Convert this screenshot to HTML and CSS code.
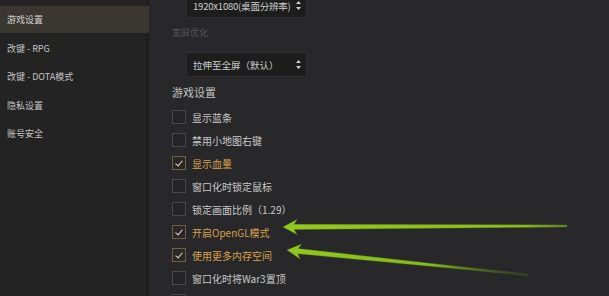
FILE: index.html
```html
<!DOCTYPE html>
<html lang="zh">
<head>
  <meta charset="UTF-8">
  <title>设置</title>
  <link rel="stylesheet" href="styles.css">
</head>
<body>
  <div class="app">
    <ul class="sidebar">
      <li class="active">游戏设置</li>
      <li>改键 - RPG</li>
      <li>改键 - DOTA模式</li>
      <li>隐私设置</li>
      <li>账号安全</li>
    </ul>

    <div class="main">
      <div class="select top">
        <span>1920x1080(桌面分辨率)</span>
        <svg class="updown" width="5" height="9" viewBox="0 0 5 9"><path d="M2.5 0L5 3H0z M2.5 9L5 6H0z" fill="#cfcfcf"/></svg>
      </div>

      <div class="field-label">宽屏优化</div>

      <div class="select">
        <span>拉伸至全屏（默认）</span>
        <svg class="updown" width="5" height="9" viewBox="0 0 5 9"><path d="M2.5 0L5 3H0z M2.5 9L5 6H0z" fill="#cfcfcf"/></svg>
      </div>

      <h3 class="heading">游戏设置</h3>

      <ul class="options">
        <li><span class="box"></span>显示蓝条</li>
        <li><span class="box"></span>禁用小地图右键</li>
        <li class="on"><span class="box"></span>显示血量</li>
        <li><span class="box"></span>窗口化时锁定鼠标</li>
        <li><span class="box"></span>锁定画面比例（1.29）</li>
        <li class="on"><span class="box"></span>开启OpenGL模式</li>
        <li class="on"><span class="box"></span>使用更多内存空间</li>
        <li><span class="box"></span>窗口化时将War3置顶</li>
        <li><span class="box"></span></li>
      </ul>
    </div>

    <!-- annotation arrows drawn over the screenshot -->
    <svg class="arrows" width="609" height="296" viewBox="0 0 609 296">
      <defs>
        <linearGradient id="fade1" x1="0" y1="0" x2="1" y2="0">
          <stop offset="0" stop-color="#92c81c"/>
          <stop offset="0.85" stop-color="#8cc21a"/>
          <stop offset="1" stop-color="#7aa81a" stop-opacity="0.7"/>
        </linearGradient>
        <linearGradient id="fade2" x1="0" y1="0" x2="1" y2="0">
          <stop offset="0" stop-color="#92c81c"/>
          <stop offset="0.6" stop-color="#86bb1a"/>
          <stop offset="1" stop-color="#6d941a" stop-opacity="0"/>
        </linearGradient>
      </defs>
      <g transform="translate(283 227) rotate(-0.2)">
        <path d="M0 0 L14 -7.5 L11 -2.6 L284 -1 L284 0.9 L11 2.6 L14 7.5 Z" fill="url(#fade1)" stroke="#5f8a12" stroke-width="0.6" stroke-opacity="0.6"/>
      </g>
      <g transform="translate(287 250) rotate(5.9)">
        <path d="M0 0 L14 -7.5 L11 -2.6 L242 -0.6 L242 0.6 L11 2.6 L14 7.5 Z" fill="url(#fade2)" stroke="#5f8a12" stroke-width="0.6" stroke-opacity="0.5"/>
      </g>
    </svg>
  </div>
</body>
</html>
```

FILE: styles.css
```css
body {
  margin: 0;
  background-color: #28282a;
  font-family: "Noto Sans CJK SC", "Noto Sans", sans-serif;
  color: #c8c8c8;
}
.app {
  position: relative;
  display: flex;
  width: 609px;
  height: 296px;
  overflow: hidden;
}
.sidebar {
  list-style: none;
  margin: 0;
  padding: 6px 0 0 0;
  width: 146px;
  flex-shrink: 0;
  background-color: #232323;
  border-right: 3px solid #1e1e1f;
}
.sidebar li {
  height: 28.5px;
  line-height: 28.5px;
  padding-left: 7px;
  font-size: 9px;
  color: #c4c4c4;
}
.sidebar li.active {
  height: 27px;
  line-height: 27px;
  margin-bottom: 1.5px;
  background-color: #3a3730;
  margin-right: -3px;
  color: #d2d2d2;
}
.main {
  flex: 1;
  display: flex;
  flex-direction: column;
  padding-left: 23px;
}
.main > * {
  flex-shrink: 0;
}
.select {
  width: 121px;
  height: 25px;
  box-sizing: border-box;
  margin-left: 14px;
  padding: 0 5px 0 6px;
  display: flex;
  align-items: center;
  justify-content: space-between;
  white-space: nowrap;
  background-color: #1d1d1e;
  border: 1px solid #2f2f30;
  font-size: 9.5px;
  color: #cfcfcf;
}
.select.top {
  margin-top: -7px;
  font-size: 9.5px;
  letter-spacing: -0.2px;
}
.field-label {
  margin: 7px 0 12px 0;
  height: 15px;
  line-height: 15px;
  font-size: 9px;
  color: #565656;
}
.heading {
  margin: 7px 0 0 0;
  height: 16px;
  line-height: 16px;
  font-size: 11px;
  font-weight: normal;
  color: #c2c2c2;
}
.options {
  list-style: none;
  margin: 5.5px 0 0 0;
  padding: 0;
}
.options li {
  height: 23px;
  display: flex;
  align-items: center;
  white-space: nowrap;
  font-size: 10px;
  color: #c9c9c9;
}
.box {
  position: relative;
  flex-shrink: 0;
  width: 14px;
  height: 14px;
  box-sizing: border-box;
  margin-right: 6px;
  border: 1px solid #474747;
  background-color: #252526;
}
.options li.on {
  color: #d7a04c;
}
.options li.on .box {
  border-color: #6e6045;
  background-color: #2a2824;
}
.options li.on .box::after {
  content: "";
  position: absolute;
  left: 4px;
  top: 2px;
  width: 3px;
  height: 6px;
  border-right: 1.5px solid #d8d8d8;
  border-bottom: 1.5px solid #d8d8d8;
  transform: rotate(40deg);
}
.arrows {
  position: absolute;
  left: 0;
  top: 0;
  pointer-events: none;
}
```
